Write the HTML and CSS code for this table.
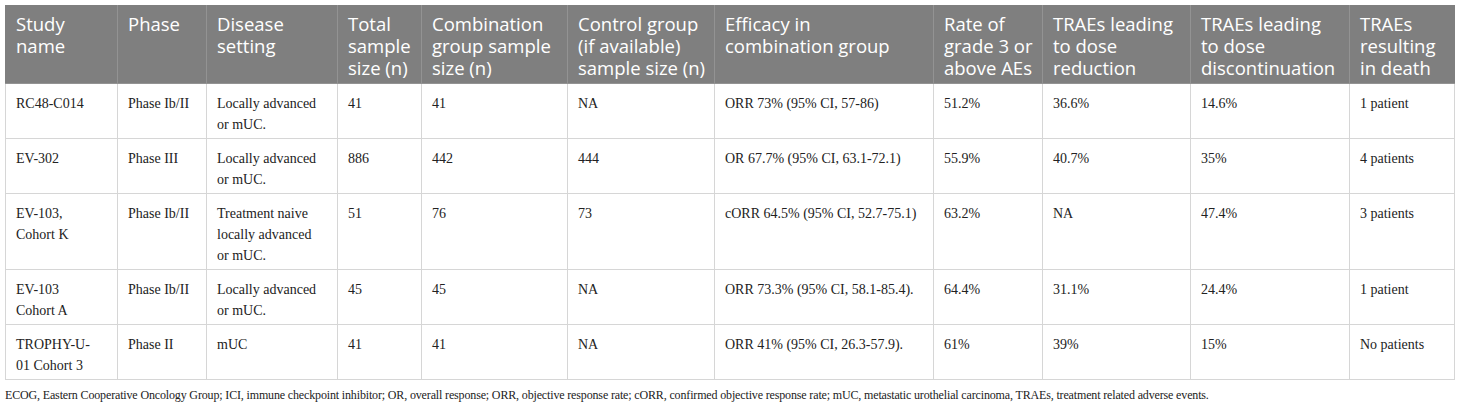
FILE: index.html
```html
<!DOCTYPE html>
<html>
<head>
<meta charset="utf-8">
<link rel="stylesheet" href="styles.css">
</head>
<body>
<div class="page">
<table class="data">
<colgroup>
<col class="c1"><col class="c2"><col class="c3"><col class="c4"><col class="c5"><col class="c6"><col class="c7"><col class="c8"><col class="c9"><col class="c10"><col class="c11">
</colgroup>
<thead>
<tr>
<th>Study name</th>
<th>Phase</th>
<th>Disease setting</th>
<th>Total sample size (n)</th>
<th>Combination group sample size (n)</th>
<th class="tight">Control group (if available) sample size (n)</th>
<th>Efficacy in combination group</th>
<th class="tight">Rate of grade 3 or above AEs</th>
<th>TRAEs leading to dose reduction</th>
<th>TRAEs leading to dose discontinuation</th>
<th>TRAEs resulting in death</th>
</tr>
</thead>
<tbody>
<tr>
<td>RC48-C014</td><td>Phase Ib/II</td><td>Locally advanced or mUC.</td><td>41</td><td>41</td><td>NA</td><td>ORR 73% (95% CI, 57-86)</td><td>51.2%</td><td>36.6%</td><td>14.6%</td><td>1 patient</td>
</tr>
<tr>
<td>EV-302</td><td>Phase III</td><td>Locally advanced or mUC.</td><td>886</td><td>442</td><td>444</td><td>OR 67.7% (95% CI, 63.1-72.1)</td><td>55.9%</td><td>40.7%</td><td>35%</td><td>4 patients</td>
</tr>
<tr>
<td>EV-103,<br>Cohort K</td><td>Phase Ib/II</td><td>Treatment naive locally advanced or mUC.</td><td>51</td><td>76</td><td>73</td><td>cORR 64.5% (95% CI, 52.7-75.1)</td><td>63.2%</td><td>NA</td><td>47.4%</td><td>3 patients</td>
</tr>
<tr>
<td>EV-103<br>Cohort A</td><td>Phase Ib/II</td><td>Locally advanced or mUC.</td><td>45</td><td>45</td><td>NA</td><td>ORR 73.3% (95% CI, 58.1-85.4).</td><td>64.4%</td><td>31.1%</td><td>24.4%</td><td>1 patient</td>
</tr>
<tr>
<td>TROPHY-U-<br>01 Cohort 3</td><td>Phase II</td><td>mUC</td><td>41</td><td>41</td><td>NA</td><td>ORR 41% (95% CI, 26.3-57.9).</td><td>61%</td><td>39%</td><td>15%</td><td>No patients</td>
</tr>
</tbody>
</table>
<p class="note">ECOG, Eastern Cooperative Oncology Group; ICI, immune checkpoint inhibitor; OR, overall response; ORR, objective response rate; cORR, confirmed objective response rate; mUC, metastatic urothelial carcinoma, TRAEs, treatment related adverse events.</p>
</div>
</body>
</html>
```

FILE: styles.css
```css
html, body {
  margin: 0;
  padding: 0;
  background: #ffffff;
}

.page {
  padding: 5px 6px 0 5px;
}

.data {
  border-collapse: collapse;
  table-layout: fixed;
  width: 1449px;
}

.c1 { width: 112px; }
.c2 { width: 89px; }
.c3 { width: 131px; }
.c4 { width: 84px; }
.c5 { width: 146px; }
.c6 { width: 147px; }
.c7 { width: 219px; }
.c8 { width: 109px; }
.c9 { width: 148px; }
.c10 { width: 159px; }
.c11 { width: 105px; }

.data th {
  background: #7f7f7f;
  color: #ffffff;
  font-family: "Open Sans", "Noto Sans", sans-serif;
  font-weight: 400;
  font-size: 18.5px;
  line-height: 22px;
  text-align: left;
  vertical-align: top;
  padding: 7px 12px 4px 10px;
  border: 1px solid #939393;
  border-top-color: #7f7f7f;
}

.data th.tight {
  padding-right: 2px;
}

.data th:first-child { border-left-color: #7f7f7f; }
.data th:last-child { border-right-color: #7f7f7f; }

.data td {
  font-family: "Liberation Serif", "DejaVu Serif", serif;
  font-size: 14px;
  line-height: 21px;
  color: #222222;
  text-align: left;
  vertical-align: top;
  padding: 9px 14px 3px 10px;
  border: 1px solid #d6d6d6;
}

.note {
  margin: 6px 0 0 0;
  font-family: "Liberation Serif", "DejaVu Serif", serif;
  font-size: 12px;
  letter-spacing: -0.15px;
  line-height: 18px;
  color: #222222;
}
```
